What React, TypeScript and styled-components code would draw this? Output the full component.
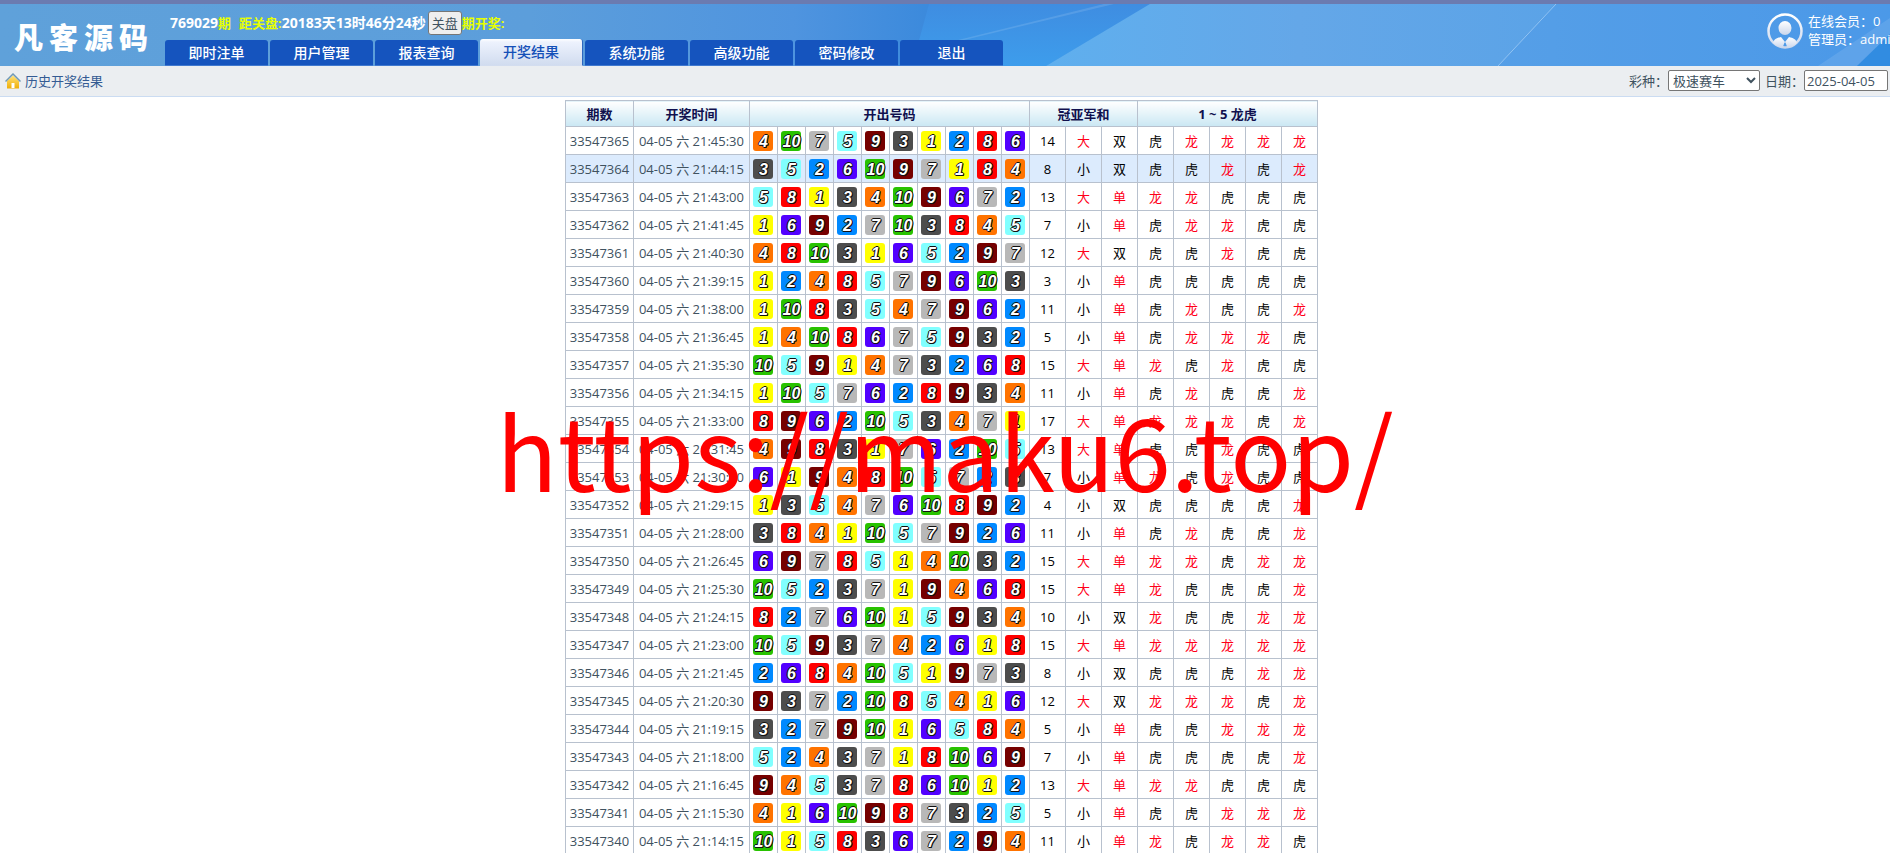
import React from "react";
import styled, { createGlobalStyle } from "styled-components";

const GlobalStyle = createGlobalStyle`
  * { box-sizing: border-box; }
  body {
    margin: 0;
    background: #fff;
    font: 13px/18px "Open Sans", "Noto Sans CJK SC", sans-serif;
    color: #40525f;
  }
  button, input, select { font: inherit; color: inherit; }
`;

const Page = styled.div`
  position: relative;
  height: 100vh;
  overflow: hidden;
`;

const Header = styled.header`
  position: relative;
  display: flex;
  height: 66px;
  border-top: 4px solid #6b7bb0;
  color: #fff;
`;

const Backdrop = styled.svg`
  position: absolute;
  inset: 0;
  width: 100%;
  height: 100%;
`;

const Logo = styled.h1`
  position: relative;
  flex: none;
  width: 165px;
  margin: 0;
  padding: 12px 0 0 14px;
  font: 900 29px/40px "Noto Sans CJK SC", sans-serif;
  white-space: nowrap;
`;

const LogoChar = styled.span`
  margin-right: 6px;
`;

const HeaderMain = styled.div`
  position: relative;
  display: flex;
  flex-direction: column;
  justify-content: space-between;
  padding-top: 7px;
`;

const Countdown = styled.div`
  display: flex;
  align-items: center;
  height: 24px;
  padding-left: 5px;
  font-weight: 700;
  white-space: nowrap;
`;

const Figure = styled.span`
  font-size: 14px;
`;

const Label = styled.span<{ $gap?: boolean }>`
  margin-left: ${(p) => (p.$gap ? 8 : 0)}px;
  color: #e6ff00;
`;

const CloseButton = styled.button`
  height: 24px;
  margin-left: 2px;
  padding: 0 3px;
  border: 1px solid #767676;
  border-radius: 3px;
  background: #efefef;
  color: #40525f;
  font-weight: 400;
`;

const Nav = styled.nav`
  display: flex;
  align-items: flex-end;
  gap: 2px;
`;

const Tab = styled.a<{ $active?: boolean }>`
  width: 103px;
  height: ${(p) => (p.$active ? 27 : 26)}px;
  border-radius: 3px 3px 0 0;
  border-bottom: 1px solid ${(p) => (p.$active ? "#d3ddef" : "#4079cf")};
  border-right: ${(p) => (p.$active ? "1px solid #2c67bf" : "0")};
  background: ${(p) => (p.$active ? "linear-gradient(#fff, #edf2fd 3px, #d1dcef)" : "#1554be")};
  color: ${(p) => (p.$active ? "#1450b8" : "#fff")};
  font-size: 14px;
  font-weight: 500;
  line-height: 25px;
  text-align: center;
  text-decoration: none;
`;

const User = styled.div`
  position: relative;
  display: flex;
  flex: none;
  gap: 5px;
  width: 123px;
  margin-left: auto;
  padding-top: 8px;
  white-space: nowrap;

  svg { flex: none; }
`;

const SubBar = styled.div`
  display: flex;
  align-items: center;
  height: 31px;
  padding: 0 2px 1px 5px;
  border-bottom: 1px solid #cbdcf2;
  background: #ebeef1;
`;

const Crumb = styled.h2`
  margin: 0 auto 0 4px;
  color: #345b93;
  font-size: 13px;
  font-weight: 400;
`;

const Field = styled.label`
  display: flex;
  align-items: center;
  margin-left: 5px;
`;

const GameSelect = styled.select`
  width: 92px;
  height: 21px;
  padding: 0;
  border: 1px solid #767676;
  border-radius: 2px;
  background: #fff;
`;

const DateInput = styled.input`
  width: 84px;
  height: 21px;
  padding: 0 2px;
  border: 1px solid #767676;
  border-radius: 2px;
  background: #fff;
`;

const Main = styled.main`
  display: flex;
  justify-content: center;
  padding: 3px 7px 0 0;
`;

const Table = styled.table`
  table-layout: fixed;
  width: 753px;
  border-collapse: collapse;
  text-align: center;
`;

const Col = styled.col<{ $w: number }>`
  width: ${(p) => p.$w}px;
`;

const Th = styled.th`
  height: 26px;
  padding: 0;
  border: 1px solid #b8c1ce;
  background: linear-gradient(#fff, #cae7f3);
  color: #10104e;
`;

const Row = styled.tr<{ $hover?: boolean }>`
  background: ${(p) => (p.$hover ? "#dcebfd" : "#fff")};
`;

const Td = styled.td<{ $tone?: "red" | "black" }>`
  height: 28px;
  padding: 0;
  border: 1px solid #b8c1ce;
  color: ${(p) => (p.$tone === "red" ? "#ff0018" : p.$tone === "black" ? "#000" : "inherit")};
  white-space: nowrap;
`;

const ballColors = [
  "#ffff00", "#0089ff", "#4d4d4d", "#ff7300", "#81ffff",
  "#5200ff", "#b8b8b8", "#ff0000", "#760000", "#28c200",
];

const Ball = styled.span<{ $n: number }>`
  display: block;
  width: 20px;
  height: 20px;
  margin: 0 auto;
  border-radius: 3px;
  background: ${(p) => ballColors[p.$n - 1]};
  color: #fff;
  font: italic 700 16px/21px "Liberation Sans", sans-serif;
  text-shadow: 1px 0 #111, -1px 0 #111, 0 1px #111, 0 -1px #111, 1px 1px #111;
`;

const Watermark = styled.div`
  position: absolute;
  top: 50%;
  left: 50%;
  transform: translate(-50%, -50%);
  padding-top: 42px;
  color: #f00;
  font: 101px/140px "Noto Sans CJK SC", sans-serif;
  white-space: nowrap;
  pointer-events: none;
`;

const tabs = ["即时注单", "用户管理", "报表查询", "开奖结果", "系统功能", "高级功能", "密码修改", "退出"];

// time | balls in finishing order | sum | size, parity and five dragon/tiger results
const draws = `21:45:30|4 10 7 5 9 3 1 2 8 6|14|大双虎龙龙龙龙
21:44:15|3 5 2 6 10 9 7 1 8 4|8|小双虎虎龙虎龙
21:43:00|5 8 1 3 4 10 9 6 7 2|13|大单龙龙虎虎虎
21:41:45|1 6 9 2 7 10 3 8 4 5|7|小单虎龙龙虎虎
21:40:30|4 8 10 3 1 6 5 2 9 7|12|大双虎虎龙虎虎
21:39:15|1 2 4 8 5 7 9 6 10 3|3|小单虎虎虎虎虎
21:38:00|1 10 8 3 5 4 7 9 6 2|11|小单虎龙虎虎龙
21:36:45|1 4 10 8 6 7 5 9 3 2|5|小单虎龙龙龙虎
21:35:30|10 5 9 1 4 7 3 2 6 8|15|大单龙虎龙虎虎
21:34:15|1 10 5 7 6 2 8 9 3 4|11|小单虎龙虎虎龙
21:33:00|8 9 6 2 10 5 3 4 7 1|17|大单龙龙龙虎龙
21:31:45|4 9 8 3 1 7 6 2 10 5|13|大单虎虎龙虎虎
21:30:30|6 1 9 4 8 10 5 7 2 3|7|小单龙虎龙虎虎
21:29:15|1 3 5 4 7 6 10 8 9 2|4|小双虎虎虎虎龙
21:28:00|3 8 4 1 10 5 7 9 2 6|11|小单虎龙虎虎龙
21:26:45|6 9 7 8 5 1 4 10 3 2|15|大单龙龙虎龙龙
21:25:30|10 5 2 3 7 1 9 4 6 8|15|大单龙虎虎虎龙
21:24:15|8 2 7 6 10 1 5 9 3 4|10|小双龙虎虎龙龙
21:23:00|10 5 9 3 7 4 2 6 1 8|15|大单龙龙龙龙龙
21:21:45|2 6 8 4 10 5 1 9 7 3|8|小双虎虎虎龙龙
21:20:30|9 3 7 2 10 8 5 4 1 6|12|大双龙龙龙虎龙
21:19:15|3 2 7 9 10 1 6 5 8 4|5|小单虎虎龙龙龙
21:18:00|5 2 4 3 7 1 8 10 6 9|7|小单虎虎虎虎龙
21:16:45|9 4 5 3 7 8 6 10 1 2|13|大单龙龙虎虎虎
21:15:30|4 1 6 10 9 8 7 3 2 5|5|小单虎虎龙龙龙
21:14:15|10 1 5 8 3 6 7 2 9 4|11|小单龙虎龙龙虎`
  .split("\n")
  .map((line, i) => {
    const [time, balls, sum, marks] = line.split("|");
    return { id: 33547365 - i, time, balls: balls.split(" ").map(Number), sum, marks: [...marks] };
  });

const HeaderArt = () => (
  <Backdrop viewBox="0 0 1890 62" preserveAspectRatio="none" aria-hidden="true">
    <defs>
      <linearGradient id="sky">
        <stop offset="0" stopColor="#5fa1da" />
        <stop offset="0.28" stopColor="#5c9edb" />
        <stop offset="0.42" stopColor="#4f94df" />
        <stop offset="0.49" stopColor="#3c8adc" />
        <stop offset="0.6" stopColor="#3d95e6" />
      </linearGradient>
      <linearGradient id="beam">
        <stop offset="0" stopColor="#5fafee" />
        <stop offset="0.3" stopColor="#64a7e8" />
        <stop offset="0.6" stopColor="#5ba3e7" />
        <stop offset="1" stopColor="#4f9ce8" />
      </linearGradient>
      <linearGradient id="deep" x2="0" y2="1">
        <stop offset="0" stopColor="#3f8de1" />
        <stop offset="1" stopColor="#3d9dec" />
      </linearGradient>
    </defs>
    <rect width="1890" height="62" fill="url(#sky)" />
    <path d="M929 0H1150L1046 62H912Z" fill="url(#deep)" />
    <path d="M1104 0H1114L956 38H950Z" fill="#fff" opacity="0.12" />
    <path d="M1150 0H1890V62H1046Z" fill="url(#beam)" />
    <path d="M1555 0H1890V62H1498Z" fill="#3f8fe6" opacity="0.25" />
    <path d="M1556 0L1498 62" stroke="#b9dcfb" strokeWidth="1" opacity="0.6" />
    <path d="M1890 14L1818 62H1857L1890 30Z" fill="#fff" opacity="0.1" />
    <path d="M1890 30L1857 62H1890Z" fill="#1f83dc" opacity="0.6" />
  </Backdrop>
);

const Avatar = () => (
  <svg width="36" height="37" viewBox="0 0 36 37" aria-hidden="true">
    <defs>
      <linearGradient id="silver" x2="0" y2="1">
        <stop offset="0" stopColor="#fff" />
        <stop offset="1" stopColor="#c9d6ec" />
      </linearGradient>
    </defs>
    <circle cx="18" cy="19" r="16.5" fill="none" stroke="url(#silver)" strokeWidth="2.500" />
    <ellipse cx="18" cy="16" rx="6.5" ry="7" fill="url(#silver)" />
    <path d="M6 31C7 27 10 26 14 25L18 30L22 25C26 26 29 27 30 31Q25 35.500 20.500 36L18.500 30.500H17.500L15.500 36Q10 35 6 31Z" fill="url(#silver)" />
  </svg>
);

const HomeIcon = () => (
  <svg width="16" height="16" viewBox="0 0 16 16" aria-hidden="true">
    <defs>
      <linearGradient id="gold" x2="0" y2="1">
        <stop offset="0" stopColor="#ffe27a" />
        <stop offset="1" stopColor="#efae05" />
      </linearGradient>
    </defs>
    <path d="M2 8L8 2.500L14 8V15.500H2Z" fill="url(#gold)" />
    <path d="M6.500 10H9.500V15H6.500Z" fill="#fff" />
    <path d="M0.500 8.500L8 1L15.500 8.500" fill="none" stroke="#7199b5" strokeWidth="1.500" />
  </svg>
);

const isRed = (mark: string) => "大单龙".includes(mark);

export default function App() {
  return (
    <Page>
      <GlobalStyle />
      <Header>
        <HeaderArt />
        <Logo>
          {[..."凡客源码"].map((c) => (
            <LogoChar key={c}>{c}</LogoChar>
          ))}
        </Logo>
        <HeaderMain>
          <Countdown>
            <Figure>769029</Figure>
            <Label>期</Label>
            <Label $gap>距关盘:</Label>
            <Figure>20183天13时46分24秒</Figure>
            <CloseButton type="button">关盘</CloseButton>
            <Label>期开奖:</Label>
          </Countdown>
          <Nav>
            {tabs.map((t) => (
              <Tab key={t} href="#" $active={t === "开奖结果"}>{t}</Tab>
            ))}
          </Nav>
        </HeaderMain>
        <User>
          <Avatar />
          <div>
            <div>在线会员：0</div>
            <div>管理员：admin</div>
          </div>
        </User>
      </Header>
      <SubBar>
        <HomeIcon />
        <Crumb>历史开奖结果</Crumb>
        <Field>
          彩种：
          <GameSelect defaultValue="极速赛车">
            <option>极速赛车</option>
          </GameSelect>
        </Field>
        <Field>
          日期：
          <DateInput type="text" defaultValue="2025-04-05" />
        </Field>
      </SubBar>
      <Main>
        <Table>
          <colgroup>
            <Col $w={68} />
            <Col $w={116} />
            <Col $w={28} span={10} />
            <Col $w={36} span={8} />
          </colgroup>
          <thead>
            <tr>
              <Th>期数</Th>
              <Th>开奖时间</Th>
              <Th colSpan={10}>开出号码</Th>
              <Th colSpan={3}>冠亚军和</Th>
              <Th colSpan={5}>1 ~ 5 龙虎</Th>
            </tr>
          </thead>
          <tbody>
            {draws.map((d, i) => (
              <Row key={d.id} $hover={i === 1}>
                <Td>{d.id}</Td>
                <Td>04-05 六 {d.time}</Td>
                {d.balls.map((n) => (
                  <Td key={n}>
                    <Ball $n={n}>{n}</Ball>
                  </Td>
                ))}
                <Td $tone="black">{d.sum}</Td>
                {d.marks.map((m, k) => (
                  <Td key={k} $tone={isRed(m) ? "red" : "black"}>{m}</Td>
                ))}
              </Row>
            ))}
          </tbody>
        </Table>
      </Main>
      <Watermark>https://maku6.top/</Watermark>
    </Page>
  );
}
